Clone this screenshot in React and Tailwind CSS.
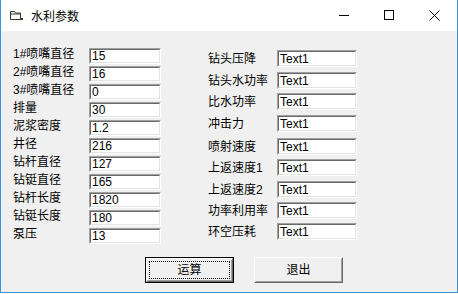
import React from "react";

const leftRows = [
  ["1#喷嘴直径", "15"],
  ["2#喷嘴直径", "16"],
  ["3#喷嘴直径", "0"],
  ["排量", "30"],
  ["泥浆密度", "1.2"],
  ["井径", "216"],
  ["钻杆直径", "127"],
  ["钻铤直径", "165"],
  ["钻杆长度", "1820"],
  ["钻铤长度", "180"],
  ["泵压", "13"],
];

// VB form, rows not evenly spaced
const rightRows = [
  ["钻头压降", "mt-[19px]"],
  ["钻头水功率", "mt-[5px]"],
  ["比水功率", "mt-[4px]"],
  ["冲击力", "mt-[5px]"],
  ["喷射速度", "mt-[6px]"],
  ["上返速度1", "mt-[4px]"],
  ["上返速度2", "mt-[5px]"],
  ["功率利用率", "mt-[4px]"],
  ["环空压耗", "mt-[4px]"],
];

function TextBox({ value, className }) {
  return (
    <div className={`border border-t-[#a0a0a0] border-l-[#a0a0a0] border-r-white border-b-white ${className}`}>
      <div className="h-full border border-t-[#696969] border-l-[#696969] border-r-[#e3e3e3] border-b-[#e3e3e3] bg-white pl-[1px] text-[12px] leading-[12px] flex items-center">
        {value}
      </div>
    </div>
  );
}

function Button({ label, focused }) {
  return (
    <div className={`w-[89px] h-[26px] ${focused ? "border border-black" : ""}`}>
      <div className="h-full border border-t-white border-l-white border-r-[#696969] border-b-[#696969]">
        <div className="h-full border border-t-[#f0f0f0] border-l-[#f0f0f0] border-r-[#a0a0a0] border-b-[#a0a0a0] bg-[#f0f0f0] p-[1px]">
          <div className={`h-full flex items-center justify-center text-[12px] ${focused ? "border border-dotted border-black" : ""}`}>
            {label}
          </div>
        </div>
      </div>
    </div>
  );
}

export default function App() {
  return (
    <div className="w-[458px] h-[294px] bg-white font-['Liberation_Sans','Noto_Sans_CJK_SC',sans-serif] text-black">
      <div className="h-[293px] border-x border-b border-[#3c94d8] flex flex-col">
        <div className="h-[31px] flex items-center bg-white">
          <svg width="13" height="11" viewBox="0 0 13 11" className="ml-[9px]">
            <path d="M0.5 1.5h4l1 1.5h5v6.5h-10z" fill="none" stroke="#2f3a2f" />
            <path d="M0.5 4h10" stroke="#2f3a2f" />
            <rect x="11" y="8" width="2" height="2" fill="#2f3a2f" />
          </svg>
          <span className="ml-[8px] text-[12px] font-['Noto_Sans_CJK_SC',sans-serif] leading-none">水利参数</span>
          <div className="ml-auto flex h-full">
            <div className="w-[46px] flex items-center justify-center">
              <div className="w-[10px] h-[1px] bg-black ml-[4px]" />
            </div>
            <div className="w-[46px] flex items-center justify-center">
              <div className="w-[10px] h-[10px] border border-black ml-[2px] -mt-[1px]" />
            </div>
            <div className="w-[46px] flex items-center justify-center">
              <svg width="11" height="11" viewBox="0 0 11 11" className="ml-[1px]">
                <path d="M0.5 0.5l10 10M10.5 0.5l-10 10" stroke="#000" strokeWidth="1" />
              </svg>
            </div>
          </div>
        </div>

        <div className="flex-1 bg-[#f0f0f0] flex flex-col">
          <div className="h-[226px] flex">
            <div className="pl-[12px] mt-[17px] flex flex-col gap-[2px]">
              {leftRows.map(([label, value]) => (
                <div key={label} className="h-[16px] flex items-start">
                  <span className="w-[76px] text-[12px] leading-[12px] h-[12px] whitespace-nowrap">{label}</span>
                  <TextBox value={value} className="w-[72px] h-[16px]" />
                </div>
              ))}
            </div>
            <div className="ml-[47px] flex flex-col">
              {rightRows.map(([label, mt]) => (
                <div key={label} className={`h-[17px] flex items-center ${mt}`}>
                  <span className="w-[69px] text-[12px] leading-[12px] whitespace-nowrap">{label}</span>
                  <TextBox value="Text1" className="w-[80px] h-[17px]" />
                </div>
              ))}
            </div>
          </div>
          <div className="flex pl-[144px] gap-[20px]">
            <Button label="运算" focused />
            <Button label="退出" />
          </div>
        </div>
      </div>
    </div>
  );
}
